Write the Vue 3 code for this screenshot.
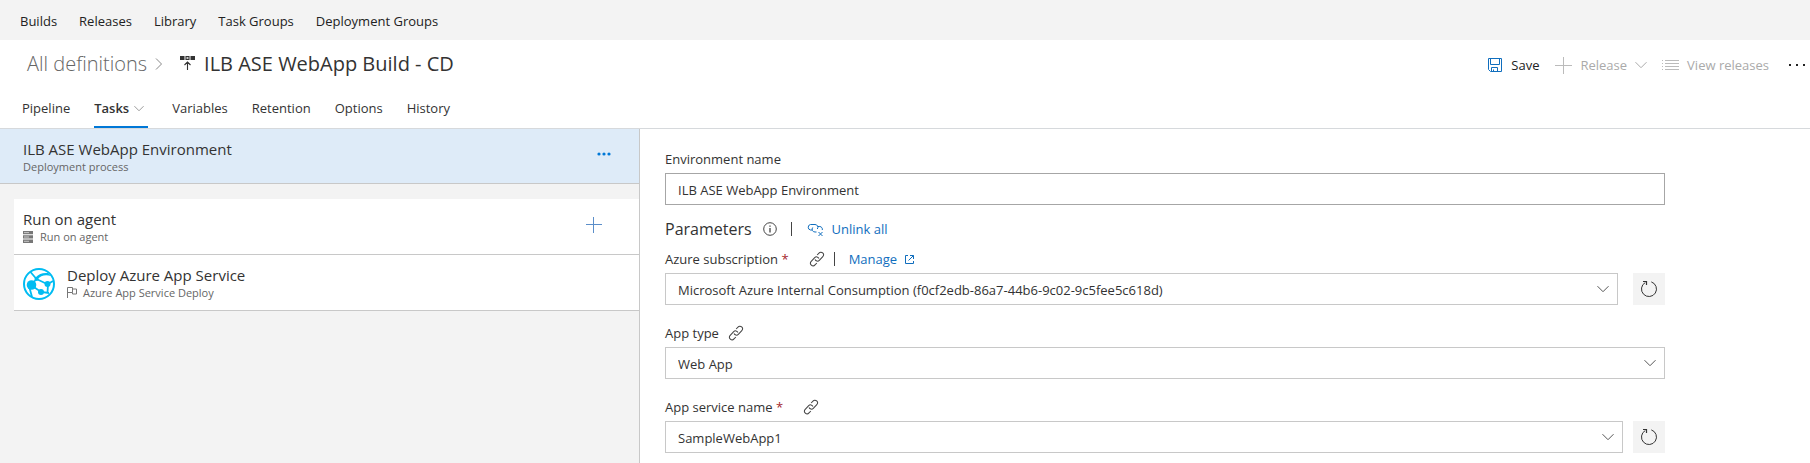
<script setup>
import { ref } from 'vue'

const hubs = ['Builds', 'Releases', 'Library', 'Task Groups', 'Deployment Groups']
const tabs = ['Pipeline', 'Tasks', 'Variables', 'Retention', 'Options', 'History']
const environment = ref('ILB ASE WebApp Environment')
const subscription = ref('Microsoft Azure Internal Consumption (f0cf2edb-86a7-44b6-9c02-9c5fee5c618d)')
const appType = ref('Web App')
const appService = ref('SampleWebApp1')
</script>

<template>
  <div class="page">
    <svg class="defs" width="0" height="0" aria-hidden="true">
      <symbol id="chain" viewBox="0 0 16 16">
        <g fill="none" stroke="currentColor" stroke-width="1" transform="rotate(-47 8 8)">
          <path d="M5 10.600H2.300a2.600 2.600 0 0 1 0-5.200H7.400a2.600 2.600 0 0 1 2.300 3.700" />
          <path d="M11 5.400h2.700a2.600 2.600 0 0 1 0 5.200H8.600a2.600 2.600 0 0 1-2.300-3.700" />
        </g>
      </symbol>
      <symbol id="chevron" viewBox="0 0 12 8">
        <path d="M.5 1.200 6 6.700l5.500-5.500" fill="none" stroke="currentColor" />
      </symbol>
      <symbol id="refresh" viewBox="0 0 18 18">
        <path d="M11.300 1.900a7.500 7.500 0 1 1-6 .6" fill="none" stroke="currentColor" />
        <path d="M3 1.500H6.500V5" fill="none" stroke="currentColor" stroke-width="1.200" />
      </symbol>
    </svg>

    <nav class="hubs" aria-label="Hubs">
      <a v-for="hub in hubs" :key="hub" href="#">{{ hub }}</a>
    </nav>

    <header class="header">
      <div class="title-row">
        <a class="crumb" href="#">All definitions</a>
        <svg class="crumb-arrow" width="8" height="12" viewBox="0 0 8 12"><path d="M1 .5 6.500 6 1 11.500" fill="none" stroke="#888" /></svg>
        <svg class="def-icon" width="15" height="16" viewBox="0 0 15 16">
          <path d="M0 0h4.500v4H0zM10.500 0H15v4h-4.500z" fill="#333" />
          <path d="M6 .6h3v2.800H6zM7.500 14V6M4.500 9l3-3 3 3" fill="none" stroke="#333" stroke-width="1.100" />
        </svg>
        <h1>ILB ASE WebApp Build - CD</h1>
        <div class="toolbar">
          <button class="save">
            <svg width="16" height="16" viewBox="0 0 16 16"><path d="M1.500 1.500h13v13H3.500l-2-2zM3.500 1.500v6h9v-6M4.500 14.500v-4h6v4M6.500 14.500v-2" fill="none" stroke="#106ebe" /></svg>
            Save
          </button>
          <button class="release" disabled>
            <svg width="17" height="17" viewBox="0 0 17 17"><path d="M0 8.500h17M8.500 0v17" stroke="#bbb" /></svg>
            Release
            <svg width="12" height="8"><use href="#chevron" /></svg>
          </button>
          <button class="view" disabled>
            <svg width="17" height="12" viewBox="0 0 17 12"><path d="M0 1.500h1M0 4.500h1M0 7.500h1M0 10.500h1M3 1.500h14M3 4.500h14M3 7.500h14M3 10.500h14" stroke="#bbb" /></svg>
            View releases
          </button>
          <button class="more" aria-label="More actions">
            <svg width="18" height="4" viewBox="0 0 18 4" fill="#222"><path d="M1 1h2v2H1zM8 1h2v2H8zM15 1h2v2h-2z" /></svg>
          </button>
        </div>
      </div>
      <nav class="tabs" aria-label="Definition">
        <a v-for="tab in tabs" :key="tab" href="#" :class="{ active: tab === 'Tasks' }">
          {{ tab }}
          <svg v-if="tab === 'Tasks'" width="10" height="7"><use href="#chevron" /></svg>
        </a>
      </nav>
    </header>

    <main class="body">
      <section class="process">
        <div class="stage">
          <div class="text">
            <h2>ILB ASE WebApp Environment</h2>
            <p>Deployment process</p>
          </div>
          <button class="stage-more" aria-label="More options">
            <svg width="14" height="4" viewBox="0 0 14 4" fill="#0078d7"><circle cx="2" cy="2" r="1.600" /><circle cx="7" cy="2" r="1.600" /><circle cx="12" cy="2" r="1.600" /></svg>
          </button>
        </div>
        <div class="phase">
          <div class="row">
            <div class="text">
              <h2>Run on agent</h2>
              <p>
                <svg class="server" width="10" height="12" viewBox="0 0 10 12"><path d="M0 0h10v3.300H0zM0 4.300h10v3.300H0zM0 8.600h10V12H0z" fill="#777" /><path d="M1 1.600h5M1 6h5M1 10.300h5" stroke="#ddd" stroke-width=".8" /></svg>
                Run on agent
              </p>
            </div>
            <button class="add" aria-label="Add task">
              <svg width="16" height="16" viewBox="0 0 16 16"><path d="M0 7.500h16M7.500 0v16" stroke="#5b8ec9" /></svg>
            </button>
          </div>
          <div class="row">
            <svg class="azure" width="32" height="32" viewBox="0 0 32 32">
              <circle cx="16" cy="16" r="15" fill="none" stroke="#00bcf2" stroke-width="2" />
              <g fill="none" stroke="#00bcf2" stroke-width="1.800">
                <path d="M7.500 4 13.500 11M8 17l5.500-6L24 16M8 17l10 7 8 1M25 16l5-3M25 16l-.5 9M6 18l3 11" />
              </g>
              <circle cx="8.500" cy="17" r="4.800" fill="#00bcf2" />
              <circle cx="13.500" cy="11" r="2" fill="#00bcf2" />
              <circle cx="24.500" cy="16" r="3" fill="#00bcf2" />
              <circle cx="18" cy="24" r="3" fill="#00bcf2" />
              <path d="M12.500 9.500C16 5.500 20 4.500 25 5l3 3c-6-1.500-10-.5-14 4z" fill="#00bcf2" />
            </svg>
            <div class="text">
              <h2>Deploy Azure App Service</h2>
              <p>
                <svg class="flag" width="10" height="11" viewBox="0 0 10 11"><path d="M.5 11V.5h5v5h-5M5.500 2h4v5h-4V5.500" fill="none" stroke="#777" /></svg>
                Azure App Service Deploy
              </p>
            </div>
          </div>
        </div>
      </section>

      <form class="settings" @submit.prevent>
        <div class="label-row"><label for="environment">Environment name</label></div>
        <input id="environment" v-model="environment" type="text" />

        <div class="params">
          <h3>Parameters</h3>
          <svg class="info" width="14" height="14" viewBox="0 0 14 14"><circle cx="7" cy="7" r="6.300" fill="none" stroke="#444" /><path d="M7 6v4.500M7 3.500v1.200" stroke="#333" stroke-width="1.200" /></svg>
          <span class="bar"></span>
          <a href="#" class="unlink">
            <svg width="17" height="15" viewBox="0 0 17 15" fill="none" stroke="currentColor"><path d="M5 8H3.500a2.800 2.800 0 0 1 0-5.500H8A2.800 2.800 0 0 1 10.300 7" /><path d="M11 4.500h1.800A2.800 2.800 0 0 1 15.300 8M9.500 10H8A2.800 2.800 0 0 1 5.700 5.500M11.500 10l4 4M15.500 10l-4 4" /></svg>
            Unlink all
          </a>
        </div>

        <div class="label-row">
          <label for="subscription">Azure subscription <span class="req">*</span></label>
          <button class="link after-req" aria-label="Link Azure subscription"><svg width="16" height="16"><use href="#chain" /></svg></button>
          <span class="bar small"></span>
          <a href="#" class="manage">
            Manage
            <svg width="9" height="9" viewBox="0 0 9 9" fill="none" stroke="currentColor"><path d="M3 .5H.5v8h8V6M5 .5h3.500V4M8.500.5l-5 5" /></svg>
          </a>
        </div>
        <div class="field">
          <div class="select">
            <select id="subscription" v-model="subscription"><option>{{ subscription }}</option></select>
            <svg width="12" height="8"><use href="#chevron" /></svg>
          </div>
          <button class="refresh wide" aria-label="Refresh subscriptions"><svg width="18" height="18"><use href="#refresh" /></svg></button>
        </div>

        <div class="label-row spaced">
          <label for="app-type">App type</label>
          <button class="link" aria-label="Link App type"><svg width="16" height="16"><use href="#chain" /></svg></button>
        </div>
        <div class="field">
          <div class="select">
            <select id="app-type" v-model="appType"><option>{{ appType }}</option></select>
            <svg width="12" height="8"><use href="#chevron" /></svg>
          </div>
        </div>

        <div class="label-row spaced">
          <label for="app-service">App service name <span class="req">*</span></label>
          <button class="link after-req" aria-label="Link App service name"><svg width="16" height="16"><use href="#chain" /></svg></button>
        </div>
        <div class="field">
          <div class="select">
            <select id="app-service" v-model="appService"><option>{{ appService }}</option></select>
            <svg width="12" height="8"><use href="#chevron" /></svg>
          </div>
          <button class="refresh" aria-label="Refresh app services"><svg width="18" height="18"><use href="#refresh" /></svg></button>
        </div>
      </form>
    </main>
  </div>
</template>

<style>
body { margin: 0; }
</style>

<style scoped>
.page {
  display: flex;
  flex-direction: column;
  min-height: 100vh;
  background: #fff;
  color: #333;
  font: 13px/20px "Open Sans", "Noto Sans", sans-serif;
}
* { box-sizing: border-box; }
.defs { position: absolute; }
svg { flex: none; display: block; }
a { color: inherit; text-decoration: none; }
button {
  display: flex;
  align-items: center;
  padding: 0;
  border: 0;
  background: none;
  color: inherit;
  font: inherit;
}
h1, h2, h3, p { margin: 0; font-weight: 400; }

.hubs {
  display: flex;
  align-items: center;
  gap: 22px;
  height: 40px;
  padding: 2px 20px 0;
  background: #f3f3f3;
  color: #222;
}

.header { border-bottom: 1px solid #d6d9dc; }
.title-row {
  display: flex;
  align-items: center;
  height: 48px;
  padding: 0 4px 0 27px;
}
.crumb { color: #666; font-size: 20px; font-weight: 300; }
.crumb-arrow { margin-left: 8px; }
.def-icon { margin: 0 9px 0 17px; }
h1 { font-size: 20px; }
.toolbar {
  display: flex;
  align-items: center;
  margin-left: auto;
  padding-top: 2px;
}
.toolbar button { gap: 8px; }
.toolbar .save { color: #222; }
.toolbar .release { margin: 0 15px 0 16px; color: #aaa; }
.toolbar .view { color: #aaa; }
.toolbar .more { margin-left: 19px; }

.tabs {
  display: flex;
  gap: 24px;
  height: 40px;
  padding-left: 22px;
}
.tabs a {
  display: flex;
  align-items: center;
  gap: 5px;
  padding-top: 2px;
  border-bottom: 2px solid transparent;
}
.tabs .active { padding-right: 4px; border-color: #0078d7; font-weight: 600; }
.tabs svg { color: #888; }

.body {
  display: grid;
  flex: 1;
  grid-template-columns: minmax(0, 64fr) minmax(0, 117fr);
}
.process { border-right: 1px solid #c8c8c8; background: #f3f3f3; }
.stage {
  display: flex;
  justify-content: space-between;
  height: 55px;
  padding: 10px 28px 0 23px;
  border-bottom: 1px solid #c8c8c8;
  background: #deebf8;
}
.stage-more { height: 30px; }
h2 { font-size: 15px; line-height: 20px; }
.text p {
  display: flex;
  align-items: center;
  color: #666;
  font-size: 11px;
  line-height: 15px;
}
.phase { margin: 15px 0 0 14px; background: #fff; }
.row {
  display: flex;
  height: 56px;
  padding: 10px 37px 0 9px;
  border-bottom: 1px solid #c8c8c8;
}
.server { margin-right: 7px; }
.flag { margin-right: 6px; }
.add { height: 32px; margin-left: auto; }
.azure { margin: 3px 12px 0 0; }

.settings {
  display: flex;
  flex-direction: column;
  width: 100%;
  max-width: 1025px;
  padding: 20px 0 10px 25px;
}
.label-row {
  display: flex;
  align-items: center;
  height: 20px;
  margin-bottom: 4px;
}
.spaced { margin-top: 18px; }
input, select {
  width: 100%;
  height: 32px;
  padding: 2px 12px 0;
  border: 1px solid #c8c8c8;
  border-radius: 0;
  appearance: none;
  background: #fff;
  color: #333;
  font: inherit;
}
input { border-color: #a6a6a6; }
.params {
  display: flex;
  align-items: center;
  height: 24px;
  margin: 12px 0 8px;
}
h3 { font-size: 16px; line-height: 20px; }
.info { margin-left: 11px; }
.bar { width: 1px; height: 14px; margin: 0 15px 0 14px; background: #444; }
.bar.small { margin: 0 14px 0 9px; }
.unlink, .manage { display: flex; align-items: center; color: #106ebe; gap: 8px; }
.req { color: #a4262c; }
.link { margin-left: 9px; color: #444; }
.link.after-req { margin-left: 20px; }
.field { display: flex; }
.select { display: grid; flex: 1; align-items: center; }
.select > * { grid-area: 1 / 1; }
.select svg { justify-self: end; margin-right: 9px; color: #555; pointer-events: none; }
.refresh {
  justify-content: center;
  width: 32px;
  height: 32px;
  margin-left: 10px;
  background: #f3f3f3;
}
.refresh.wide { margin-left: 15px; }
</style>
